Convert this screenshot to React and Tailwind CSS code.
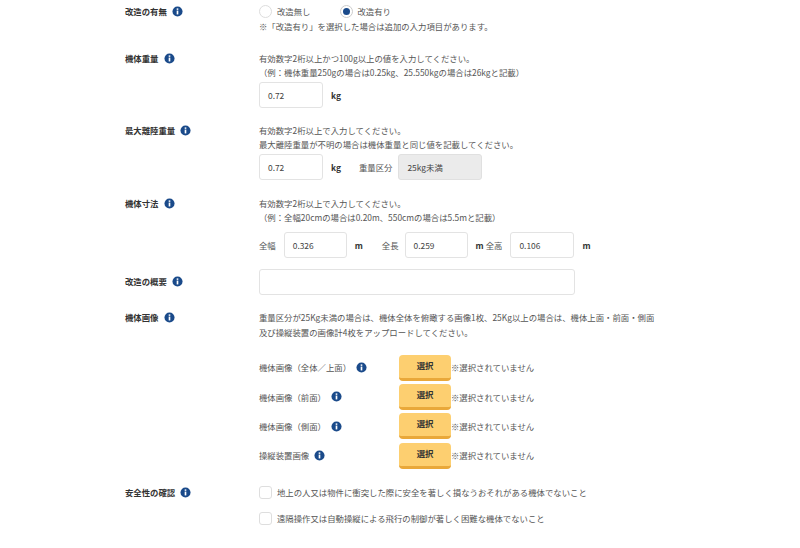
const Info = () => (
  <svg viewBox="0 0 12 12" className="w-[11px] h-[11px] shrink-0">
    <circle cx="6" cy="6" r="5.5" fill="#1a4a8a" />
    <rect x="5.1" y="5" width="1.8" height="4.2" fill="#fff" />
    <rect x="5.1" y="2.6" width="1.8" height="1.6" fill="#fff" />
  </svg>
);

const Label = ({ children, className = "" }) => (
  <div className={`w-[134px] shrink-0 flex items-center gap-[5px] h-[14px] font-bold text-[#333] text-[8.4px] ${className}`}>
    <span>{children}</span>
    <Info />
  </div>
);

const Field = ({ value, className }) => (
  <div className={`h-[26px] bg-white border border-[#e3e3e3] rounded-[3px] flex items-center pl-2 text-[8.4px] text-[#444] ${className}`}>
    {value}
  </div>
);

const Line = ({ children, className = "" }) => (
  <p className={`h-[14px] leading-[14px] text-[8.4px] text-[#555] whitespace-nowrap ${className}`}>{children}</p>
);

const Unit = ({ children, className = "" }) => (
  <span className={`font-bold text-[8.4px] text-[#333] ${className}`}>{children}</span>
);

const Upload = ({ label }) => (
  <div className="flex items-center h-[29.3px]">
    <div className="w-[140px] flex items-center gap-[5px] text-[8.4px] text-[#555]">
      <span>{label}</span>
      <Info />
    </div>
    <div className="w-[52px] h-[26px] bg-[#fdcf70] border-b-[3px] border-[#e9a83a] rounded-[4px] flex items-center justify-center pb-[2px] font-bold text-[8.4px] text-[#333]">
      選択
    </div>
    <span className="text-[8.4px] text-[#555]">※選択されていません</span>
  </div>
);

const Check = ({ children }) => (
  <div className="flex items-center gap-[5px] h-[14px]">
    <span className="w-[13px] h-[13px] bg-white border border-[#dedede] rounded-[3px]"></span>
    <Line>{children}</Line>
  </div>
);

export default function App() {
  return (
    <div
      className="w-[800px] h-[548px] overflow-hidden bg-white pl-[125px] pt-[4px]"
      style={{ fontFamily: '"Noto Sans CJK JP", "Noto Sans", sans-serif' }}
    >
      <div className="flex pb-[18px]">
        <Label>改造の有無</Label>
        <div>
          <div className="flex items-center h-[14px]">
            <span className="w-[13px] h-[13px] rounded-full border border-[#ddd] bg-white"></span>
            <Line className="ml-[5px]">改造無し</Line>
            <span className="ml-[29px] w-[13px] h-[13px] rounded-full border border-[#ccc] flex items-center justify-center">
              <span className="w-[7px] h-[7px] rounded-full bg-[#1a4a8a]"></span>
            </span>
            <Line className="ml-[5px]">改造有り</Line>
          </div>
          <Line className="mt-[1px]">※「改造有り」を選択した場合は追加の入力項目があります。</Line>
        </div>
      </div>

      <div className="flex pb-[15px]">
        <Label>機体重量</Label>
        <div>
          <Line>有効数字2桁以上かつ100g以上の値を入力してください。</Line>
          <Line>（例：機体重量250gの場合は0.25kg、25.550kgの場合は26kgと記載）</Line>
          <div className="flex items-center mt-[3px]">
            <Field value="0.72" className="w-[64px]" />
            <Unit className="ml-2">kg</Unit>
          </div>
        </div>
      </div>

      <div className="flex pb-[16px]">
        <Label>最大離陸重量</Label>
        <div>
          <Line>有効数字2桁以上で入力してください。</Line>
          <Line>最大離陸重量が不明の場合は機体重量と同じ値を記載してください。</Line>
          <div className="flex items-center mt-[3px]">
            <Field value="0.72" className="w-[64px]" />
            <Unit className="ml-2">kg</Unit>
            <span className="ml-[18px] text-[8.4px] text-[#555]">重量区分</span>
            <div className="ml-[6px] w-[84px] h-[26px] bg-[#ebebeb] border border-[#e0e0e0] rounded-[3px] flex items-center pl-2 text-[8.4px] text-[#444]">25kg未満</div>
          </div>
        </div>
      </div>

      <div className="flex pb-[11px]">
        <Label>機体寸法</Label>
        <div>
          <Line>有効数字2桁以上で入力してください。</Line>
          <Line>（例：全幅20cmの場合は0.20m、550cmの場合は5.5mと記載）</Line>
          <div className="flex items-center mt-[8px]">
            <span className="text-[8.4px] text-[#555]">全幅</span>
            <Field value="0.326" className="w-[63px] ml-[8px]" />
            <Unit className="ml-2">m</Unit>
            <span className="ml-[19px] text-[8.4px] text-[#555]">全長</span>
            <Field value="0.259" className="w-[63px] ml-[6px]" />
            <Unit className="ml-2">m</Unit>
            <span className="ml-[2px] text-[8.4px] text-[#555]">全高</span>
            <Field value="0.106" className="w-[64px] ml-[8px]" />
            <Unit className="ml-2">m</Unit>
          </div>
        </div>
      </div>

      <div className="flex pb-[15px] items-center">
        <Label className="mb-[2px]">改造の概要</Label>
        <Field value="" className="w-[316px]" />
      </div>

      <div className="flex pb-[15px]">
        <Label>機体画像</Label>
        <div>
          <Line>重量区分が25Kg未満の場合は、機体全体を俯瞰する画像1枚、25Kg以上の場合は、機体上面・前面・側面</Line>
          <Line className="mt-[1px]">及び操縦装置の画像計4枚をアップロードしてください。</Line>
          <div className="mt-[14px]">
            <Upload label="機体画像（全体／上面）" />
            <Upload label="機体画像（前面）" />
            <Upload label="機体画像（側面）" />
            <Upload label="操縦装置画像" />
          </div>
        </div>
      </div>

      <div className="flex">
        <Label>安全性の確認</Label>
        <div className="flex flex-col gap-[12px]">
          <Check>地上の人又は物件に衝突した際に安全を著しく損なうおそれがある機体でないこと</Check>
          <Check>遠隔操作又は自動操縦による飛行の制御が著しく困難な機体でないこと</Check>
        </div>
      </div>
    </div>
  );
}
